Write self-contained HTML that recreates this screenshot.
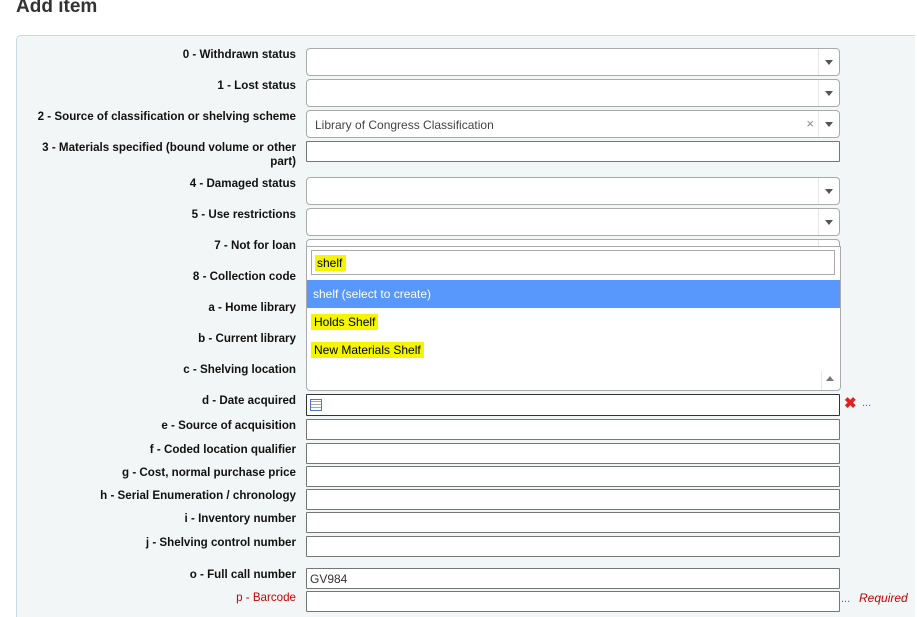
<!DOCTYPE html>
<html><head><style>
html,body{margin:0;width:917px;height:617px;overflow:hidden}
body{background:#fff;font-family:"Liberation Sans",Arial,sans-serif;position:relative}
h1{position:absolute;left:16px;top:-4px;margin:0;font-size:19px;font-weight:bold;color:#333;line-height:22px}
.panel{position:absolute;left:16px;top:35px;width:899px;height:582px;background:#f3f6f7;border:1px solid #c8dbe0;border-right:none;border-bottom:none;border-radius:5px 0 0 0;box-sizing:border-box}
.l{position:absolute;right:621px;font-size:11.6px;font-weight:bold;color:#111;text-align:right;width:270px;line-height:14px}
.s{position:absolute;left:306px;width:532px;height:26px;background:#fff;border:1px solid #aaa;border-radius:4px}
.s:after{content:"";position:absolute;right:0;top:0;width:20px;height:26px;border-left:1px solid #e6e6e6}
.s i{position:absolute;right:6px;top:11px;border-left:4px solid transparent;border-right:4px solid transparent;border-top:5px solid #555}
.t{position:absolute;left:306px;width:532px;height:19px;background:#fff;border:1px solid #767676;border-radius:1px}
.dd{position:absolute;left:306px;top:246px;width:533px;height:143px;background:#fff;border:1px solid #aaa;border-radius:0 0 4px 4px}
.hl{background:#f5f500}
</style></head><body>
<h1>Add item</h1>
<div class="panel"></div>
<div class="l" style="top:48px">0 - Withdrawn status</div>
<div class="l" style="top:79px">1 - Lost status</div>
<div class="l" style="top:110px;width:290px">2 - Source of classification or shelving scheme</div>
<div class="l" style="top:141px">3 - Materials specified (bound volume or other part)</div>
<div class="l" style="top:177px">4 - Damaged status</div>
<div class="l" style="top:208px">5 - Use restrictions</div>
<div class="l" style="top:239px">7 - Not for loan</div>
<div class="l" style="top:270px">8 - Collection code</div>
<div class="l" style="top:301px">a - Home library</div>
<div class="l" style="top:332px">b - Current library</div>
<div class="l" style="top:363px">c - Shelving location</div>
<div class="l" style="top:394px">d - Date acquired</div>
<div class="l" style="top:419px">e - Source of acquisition</div>
<div class="l" style="top:443px">f - Coded location qualifier</div>
<div class="l" style="top:466px">g - Cost, normal purchase price</div>
<div class="l" style="top:489px">h - Serial Enumeration / chronology</div>
<div class="l" style="top:512px">i - Inventory number</div>
<div class="l" style="top:536px">j - Shelving control number</div>
<div class="l" style="top:568px">o - Full call number</div>
<div class="l" style="top:591px;color:#c00;font-weight:normal">p - Barcode</div>

<div class="s" style="top:48px"><i></i></div>
<div class="s" style="top:79px"><i></i></div>
<div class="s" style="top:110px"><i></i><span style="position:absolute;left:8px;top:7px;font-size:12px;color:#444">Library of Congress Classification</span><span style="position:absolute;right:25px;top:5px;font-size:13px;color:#888">×</span></div>
<div class="t" style="top:141px"></div>
<div class="s" style="top:177px"><i></i></div>
<div class="s" style="top:208px"><i></i></div>
<div class="s" style="top:239px"></div>
<div class="dd">
 <div style="position:absolute;left:4px;top:3px;width:522px;height:23px;border:1px solid #aaa"><span class="hl" style="position:absolute;left:3px;top:4px;font-size:12px;padding:1px 4px 1px 2px">shelf</span></div>
 <div style="position:absolute;left:0;top:33px;width:533px;height:28px;background:#5897fb;color:#fff;font-size:12px;line-height:28px;padding-left:6px;box-sizing:border-box">shelf (select to create)</div>
 <span class="hl" style="position:absolute;left:4px;top:67px;font-size:12px;padding:1px 3px">Holds Shelf</span>
 <span class="hl" style="position:absolute;left:4px;top:95px;font-size:12px;padding:1px 3px">New Materials Shelf</span>
 <div style="position:absolute;right:0;top:124px;width:18px;height:19px;border-left:1px solid #e6e6e6"></div>
 <i style="position:absolute;right:6px;top:129px;border-left:4px solid transparent;border-right:4px solid transparent;border-bottom:5px solid #777"></i>
</div>
<div class="t" style="top:394px;height:20px;border-color:#333"><div style="position:absolute;left:3px;top:4px;width:10px;height:10px;border:1px solid #4a7ab8;background:repeating-linear-gradient(0deg,#fff 0 2px,#9ab 2px 3px)"></div></div>
<span style="position:absolute;left:844px;top:394px;color:#d22;font-weight:bold;font-size:15px">✖</span>
<span style="position:absolute;left:862px;top:397px;color:#2a6ebb;font-size:11px">...</span>
<div class="t" style="top:419px"></div>
<div class="t" style="top:443px"></div>
<div class="t" style="top:466px"></div>
<div class="t" style="top:489px"></div>
<div class="t" style="top:512px"></div>
<div class="t" style="top:536px"></div>
<div class="t" style="top:568px"><span style="position:absolute;left:3px;top:3px;font-size:12px;color:#333">GV984</span></div>
<div class="t" style="top:591px"></div>
<span style="position:absolute;left:841px;top:593px;color:#2a6ebb;font-size:11px">...</span>
<span style="position:absolute;left:859px;top:591px;color:#c00;font-size:12px;font-style:italic">Required</span>
</body></html>
